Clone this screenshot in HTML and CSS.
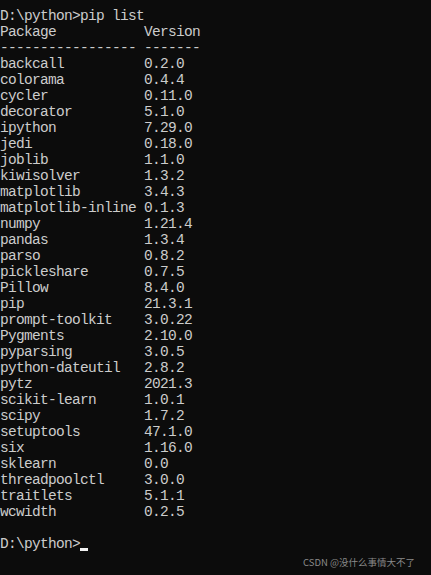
FILE: index.html
```html
<!DOCTYPE html>
<html>
<head>
<meta charset="utf-8">
<link rel="stylesheet" href="styles.css">
</head>
<body>
<div class="console">
<pre class="out">D:\python>pip list
Package           Version
----------------- -------
backcall          0.2.0
colorama          0.4.4
cycler            0.11.0
decorator         5.1.0
ipython           7.29.0
jedi              0.18.0
joblib            1.1.0
kiwisolver        1.3.2
matplotlib        3.4.3
matplotlib-inline 0.1.3
numpy             1.21.4
pandas            1.3.4
parso             0.8.2
pickleshare       0.7.5
Pillow            8.4.0
pip               21.3.1
prompt-toolkit    3.0.22
Pygments          2.10.0
pyparsing         3.0.5
python-dateutil   2.8.2
pytz              2021.3
scikit-learn      1.0.1
scipy             1.7.2
setuptools        47.1.0
six               1.16.0
sklearn           0.0
threadpoolctl     3.0.0
traitlets         5.1.1
wcwidth           0.2.5

D:\python><span class="cursor"></span></pre>
<div class="watermark">CSDN @没什么事情大不了</div>
</div>
</body>
</html>
```
FILE: styles.css
```css
html, body {
  margin: 0;
  padding: 0;
  background: #0c0c0c;
}
.console {
  position: relative;
  width: 431px;
  height: 575px;
  overflow: hidden;
  background: #0c0c0c;
}
.out {
  margin: 0;
  padding: 8px 0 0 0;
  font-family: "Liberation Mono", "DejaVu Sans Mono", monospace;
  font-size: 14.5px;
  letter-spacing: -0.7px;
  line-height: 16px;
  color: #cccccc;
  white-space: pre;
}
.cursor {
  display: inline-block;
  width: 8px;
  height: 3px;
  background: #f2f2f2;
  vertical-align: -3px;
}
.watermark {
  position: absolute;
  right: 16px;
  bottom: 7px;
  font-family: "Noto Sans CJK SC", "Noto Sans", sans-serif;
  font-size: 9.5px;
  line-height: 12px;
  color: #8a8a8a;
}
```
